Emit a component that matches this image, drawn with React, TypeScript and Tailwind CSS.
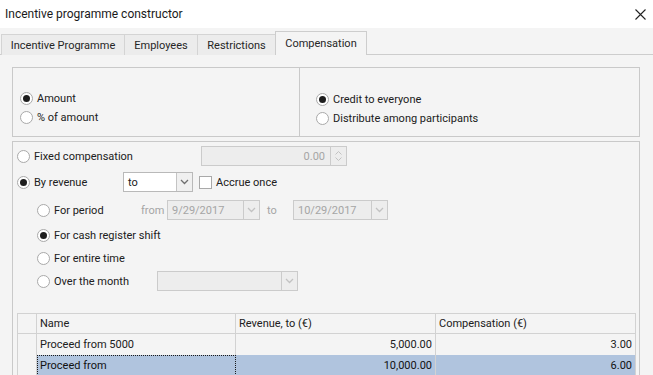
import React from 'react';

const Radio = ({ checked }: { checked?: boolean }) => (
    <span className="w-[13px] h-[13px] shrink-0 rounded-full border border-[#a9a9a9] bg-white flex items-center justify-center">
        {checked && <span className="w-[7px] h-[7px] rounded-full bg-[#1e1e1e]" />}
    </span>
);

const RadioLabel = ({ checked, label, className = '' }: { checked?: boolean; label: string; className?: string }) => (
    <div className={`flex items-center gap-[4px] ${className}`}>
        <Radio checked={checked} />
        <span className="text-[#202020] whitespace-nowrap">{label}</span>
    </div>
);

const Chevron = ({ color = '#7a7a7a' }: { color?: string }) => (
    <svg width="9" height="6" viewBox="0 0 9 6">
        <path d="M1 1 L4.5 4.5 L8 1" fill="none" stroke={color} strokeWidth="1.3" />
    </svg>
);

const Combo = ({ value, width, disabled }: { value: string; width: string; disabled?: boolean }) => (
    <div
        className={`flex h-[20px] border ${width} ${
            disabled ? 'border-[#cbcbcb] bg-[#ededed]' : 'border-[#b9b9b9] bg-white'
        }`}
    >
        <span className={`flex-1 flex items-center pl-[4px] ${disabled ? 'text-[#a5a5a5]' : 'text-[#202020]'}`}>{value}</span>
        <span
            className={`w-[16px] flex items-center justify-center border-l ${
                disabled ? 'border-[#cbcbcb]' : 'border-[#c4c4c4] bg-[#f0f0f0]'
            }`}
        >
            <Chevron color={disabled ? '#c2c2c2' : '#6f6f6f'} />
        </span>
    </div>
);

const tabs = [
    { label: 'Incentive Programme', w: 'w-[123px]' },
    { label: 'Employees', w: 'w-[73px]' },
    { label: 'Restrictions', w: 'w-[78px]' },
];

export default function App() {
    return (
        <div
            className="w-[653px] h-[375px] overflow-hidden bg-[#f4f4f4] text-[11px] leading-none text-[#202020]"
            style={{ fontFamily: 'Roboto, "Noto Sans", sans-serif' }}
        >
            {/* Title bar */}
            <div className="h-[28px] bg-white flex items-center justify-between pl-[5px] pr-[7px]">
                <span className="text-[12px] text-[#1a1a1a]">Incentive programme constructor</span>
                <svg width="11" height="11" viewBox="0 0 11 11">
                    <path d="M0.5 0.5 L10.5 10.5 M10.5 0.5 L0.5 10.5" stroke="#222" strokeWidth="1.1" />
                </svg>
            </div>

            {/* Tabs */}
            <div className="h-[27px] pt-[3px] pl-[1px] flex items-end border-b border-[#cdcdcd]">
                {tabs.map((t) => (
                    <div
                        key={t.label}
                        className={`${t.w} h-[21px] -mb-px flex items-center justify-center border-t border-l border-[#d4d4d4] bg-[#ececec] text-[#262626]`}
                    >
                        {t.label}
                    </div>
                ))}
                <div className="w-[92px] h-[24px] -mb-px flex items-center justify-center border border-b-0 border-[#cdcdcd] bg-[#f4f4f4] text-[#262626]">
                    Compensation
                </div>
            </div>

            {/* Content */}
            <div className="pt-[12px] pl-[12px] pr-[13px]">
                {/* Group 1 */}
                <div className="h-[70px] flex border border-[#c9c9c9]">
                    <div className="w-[287px] border-r border-[#c9c9c9] pl-[7px] pt-[24px] flex flex-col gap-[6px]">
                        <RadioLabel checked label="Amount" />
                        <RadioLabel label="% of amount" />
                    </div>
                    <div className="flex-1 pl-[16px] pt-[25px] flex flex-col gap-[6px]">
                        <RadioLabel checked label="Credit to everyone" />
                        <RadioLabel label="Distribute among participants" />
                    </div>
                </div>

                {/* Group 2 */}
                <div className="mt-[4px] h-[240px] border border-[#c9c9c9] pl-[4px] pr-[3px] pt-[4px]">
                    <div className="h-[20px] flex items-center">
                        <RadioLabel label="Fixed compensation" className="w-[184px]" />
                        <div className="w-[146px] h-[20px] flex border border-[#cbcbcb] bg-[#ededed]">
                            <span className="flex-1 flex items-center justify-end pr-[5px] text-[#a5a5a5]">0.00</span>
                            <span className="w-[16px] border-l border-[#cbcbcb] flex flex-col items-center justify-center gap-[2px]">
                                <svg width="7" height="4" viewBox="0 0 7 4">
                                    <path d="M0.5 3.5 L3.5 0.5 L6.5 3.5" fill="none" stroke="#c2c2c2" strokeWidth="1" />
                                </svg>
                                <svg width="7" height="4" viewBox="0 0 7 4">
                                    <path d="M0.5 0.5 L3.5 3.5 L6.5 0.5" fill="none" stroke="#c2c2c2" strokeWidth="1" />
                                </svg>
                            </span>
                        </div>
                    </div>

                    <div className="mt-[6px] h-[20px] flex items-center">
                        <RadioLabel checked label="By revenue" className="w-[106px]" />
                        <Combo value="to" width="w-[70px]" />
                        <span className="ml-[6px] w-[13px] h-[13px] border border-[#a9a9a9] bg-white" />
                        <span className="ml-[4px]">Accrue once</span>
                    </div>

                    <div className="mt-[8px] h-[20px] flex items-center pl-[20px]">
                        <RadioLabel label="For period" className="w-[104px]" />
                        <span className="w-[26px] text-[#a5a5a5]">from</span>
                        <Combo value="9/29/2017" width="w-[93px]" disabled />
                        <span className="ml-[7px] w-[26px] text-[#a5a5a5]">to</span>
                        <Combo value="10/29/2017" width="w-[95px]" disabled />
                    </div>

                    <div className="mt-[5px] h-[20px] flex items-center pl-[20px]">
                        <RadioLabel checked label="For cash register shift" />
                    </div>

                    <div className="mt-[3px] h-[20px] flex items-center pl-[20px]">
                        <RadioLabel label="For entire time" />
                    </div>

                    <div className="mt-[3px] h-[20px] flex items-center pl-[20px]">
                        <RadioLabel label="Over the month" className="w-[120px]" />
                        <Combo value="" width="w-[141px]" disabled />
                    </div>

                    {/* Grid */}
                    <div className="mt-[22px] border-t border-l border-[#d2d2d2]">
                        <div className="flex h-[20px]">
                            <div className="w-[19px] border-r border-b border-[#d2d2d2]" />
                            <div className="w-[199px] border-r border-b border-[#d2d2d2] flex items-center pl-[3px]">Name</div>
                            <div className="w-[200px] border-r border-b border-[#d2d2d2] flex items-center pl-[3px]">Revenue, to (€)</div>
                            <div className="flex-1 border-r border-b border-[#d2d2d2] flex items-center pl-[3px]">Compensation (€)</div>
                        </div>
                        <div className="flex h-[21px]">
                            <div className="w-[19px] border-r border-[#d2d2d2]" />
                            <div className="w-[199px] border-r border-[#d2d2d2] flex items-center pl-[3px]">Proceed from 5000</div>
                            <div className="w-[200px] border-r border-[#d2d2d2] flex items-center justify-end pr-[3px]">5,000.00</div>
                            <div className="flex-1 border-r border-[#d2d2d2] flex items-center justify-end pr-[3px]">3.00</div>
                        </div>
                        <div className="flex h-[21px]">
                            <div className="w-[19px] border-r border-[#d2d2d2]" />
                            <div className="w-[199px] bg-[#b0c4de] border border-dotted border-[#1a1a1a] flex items-center pl-[2px] text-[#111]">
                                Proceed from
                            </div>
                            <div className="w-[200px] bg-[#b0c4de] border-r border-[#d2d2d2] flex items-center justify-end pr-[3px] text-[#111]">
                                10,000.00
                            </div>
                            <div className="flex-1 bg-[#b0c4de] border-r border-[#d2d2d2] flex items-center justify-end pr-[3px] text-[#111]">
                                6.00
                            </div>
                        </div>
                    </div>
                </div>
            </div>
        </div>
    );
}
